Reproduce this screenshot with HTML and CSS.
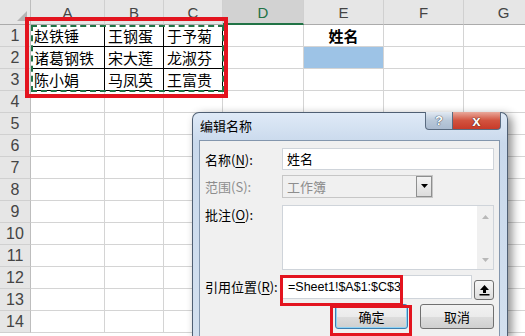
FILE: index.html
```html
<!DOCTYPE html>
<html lang="zh-CN">
<head>
    <meta charset="UTF-8">
    <title>编辑名称</title>
    <link rel="stylesheet" href="styles.css">
</head>
<body>
    <div class="sheet">
        <div class="grid">
            <div class="corner"><span class="tri"></span></div>
            <div class="colh">A</div>
            <div class="colh">B</div>
            <div class="colh">C</div>
            <div class="colh sel">D</div>
            <div class="colh">E</div>
            <div class="colh">F</div>
            <div class="colh">G</div>

            <div class="rowh">1</div>
            <div class="cell b">赵铁锤</div><div class="cell b">王钢蛋</div><div class="cell b">于予菊</div>
            <div class="cell"></div><div class="cell bold">姓名</div><div class="cell"></div><div class="cell"></div>

            <div class="rowh">2</div>
            <div class="cell b">诸葛钢铁</div><div class="cell b">宋大莲</div><div class="cell b">龙淑芬</div>
            <div class="cell"></div><div class="cell fill"></div><div class="cell"></div><div class="cell"></div>

            <div class="rowh">3</div>
            <div class="cell b">陈小娟</div><div class="cell b">马凤英</div><div class="cell b">王富贵</div>
            <div class="cell"></div><div class="cell"></div><div class="cell"></div><div class="cell"></div>

            <div class="rowh">4</div><div class="cell"></div><div class="cell"></div><div class="cell"></div><div class="cell"></div><div class="cell"></div><div class="cell"></div><div class="cell"></div>
            <div class="rowh">5</div><div class="cell"></div><div class="cell"></div><div class="cell"></div><div class="cell"></div><div class="cell"></div><div class="cell"></div><div class="cell"></div>
            <div class="rowh">6</div><div class="cell"></div><div class="cell"></div><div class="cell"></div><div class="cell"></div><div class="cell"></div><div class="cell"></div><div class="cell"></div>
            <div class="rowh">7</div><div class="cell"></div><div class="cell"></div><div class="cell"></div><div class="cell"></div><div class="cell"></div><div class="cell"></div><div class="cell"></div>
            <div class="rowh">8</div><div class="cell"></div><div class="cell"></div><div class="cell"></div><div class="cell"></div><div class="cell"></div><div class="cell"></div><div class="cell"></div>
            <div class="rowh">9</div><div class="cell"></div><div class="cell"></div><div class="cell"></div><div class="cell"></div><div class="cell"></div><div class="cell"></div><div class="cell"></div>
            <div class="rowh">10</div><div class="cell"></div><div class="cell"></div><div class="cell"></div><div class="cell"></div><div class="cell"></div><div class="cell"></div><div class="cell"></div>
            <div class="rowh">11</div><div class="cell"></div><div class="cell"></div><div class="cell"></div><div class="cell"></div><div class="cell"></div><div class="cell"></div><div class="cell"></div>
            <div class="rowh">12</div><div class="cell"></div><div class="cell"></div><div class="cell"></div><div class="cell"></div><div class="cell"></div><div class="cell"></div><div class="cell"></div>
            <div class="rowh">13</div><div class="cell"></div><div class="cell"></div><div class="cell"></div><div class="cell"></div><div class="cell"></div><div class="cell"></div><div class="cell"></div>
            <div class="rowh">14</div><div class="cell"></div><div class="cell"></div><div class="cell"></div><div class="cell"></div><div class="cell"></div><div class="cell"></div><div class="cell"></div>
        </div>
        <div class="ants"></div>
        <div class="mark mark-table"></div>
    </div>

    <div class="dialog">
        <div class="titlebar">
            <span class="title">编辑名称</span>
            <div class="caption-btns">
                <span class="cap-help">?</span>
                <span class="cap-close">x</span>
            </div>
        </div>
        <div class="client">
            <div class="form">
                <label>名称(<u>N</u>):</label>
                <div class="field">姓名</div>

                <label class="off">范围(S):</label>
                <div class="select">
                    <span>工作簿</span>
                    <span class="drop"><svg width="7" height="4" viewBox="0 0 7 4"><path d="M0 0h7L3.5 4z" fill="#000"/></svg></span>
                </div>

                <label>批注(<u>O</u>):</label>
                <div class="memo">
                    <div class="vscroll">
                        <svg width="7" height="4" viewBox="0 0 7 4"><path d="M0 4h7L3.5 0z" fill="#b8b8b8"/></svg>
                        <svg width="7" height="4" viewBox="0 0 7 4"><path d="M0 0h7L3.5 4z" fill="#b8b8b8"/></svg>
                    </div>
                </div>

                <label>引用位置(<u>R</u>):</label>
                <div class="refrow">
                    <div class="field ref">=Sheet1!$A$1:$C$3</div>
                    <span class="collapse"><svg width="11" height="12" viewBox="0 0 11 12"><path d="M5.5 1L1 6h3v3h3V6h3z" fill="#000"/><rect x="0.5" y="10" width="10" height="1.5" fill="#000"/></svg></span>
                </div>
            </div>
            <div class="actions">
                <button class="btn ok">确定</button>
                <button class="btn">取消</button>
            </div>
        </div>
    </div>

    <div class="mark mark-ref"></div>
    <div class="mark mark-ok"></div>
</body>
</html>
```

FILE: styles.css
```css
*{
    margin: 0;
    padding: 0;
    box-sizing: border-box;
}
body{
    width: 525px;
    height: 336px;
    overflow: hidden;
    background: #fff;
    font-family: "Noto Sans CJK SC", "Liberation Sans", sans-serif;
    position: relative;
}

/* 表格 */
.sheet{
    position: relative;
    height: 336px;
    overflow: hidden;
}
.grid{
    display: grid;
    grid-template-columns: 31px 74px 59px 59px 81px 80px 80px 80px;
    grid-template-rows: 25px;
    grid-auto-rows: 22px;
    width: 544px;
}
.corner{
    background: #e6e6e6;
    border-right: 1px solid #bdbdbd;
    border-bottom: 1px solid #ababab;
    position: relative;
}
.tri{
    position: absolute;
    right: 3px;
    bottom: 3px;
    width: 0;
    height: 0;
    border-left: 10px solid transparent;
    border-bottom: 10px solid #b5b5b5;
}
.colh{
    background: #e6e6e6;
    border-right: 1px solid #d0d0d0;
    border-bottom: 1px solid #ababab;
    color: #444;
    font-family: "Liberation Sans", sans-serif;
    font-size: 15px;
    text-align: center;
    line-height: 25px;
}
.colh.sel{
    background: #d2d2d2;
    border-bottom: 2px solid #217346;
    color: #217346;
}
.rowh{
    background: #e6e6e6;
    border-right: 1px solid #bdbdbd;
    border-bottom: 1px solid #d0d0d0;
    color: #444;
    font-family: "Liberation Sans", sans-serif;
    font-size: 16px;
    text-align: center;
    line-height: 22px;
}
.cell{
    border-right: 1px solid #d4d4d4;
    border-bottom: 1px solid #d4d4d4;
    font-size: 15px;
    line-height: 21px;
    padding-left: 3px;
    color: #000;
    white-space: nowrap;
}
.cell.b{
    border-color: #000;
}
.cell.bold{
    font-weight: bold;
    text-align: center;
    padding-left: 0;
}
.cell.fill{
    background: #9dc3e6;
}
.ants{
    position: absolute;
    left: 31px;
    top: 25px;
    width: 193px;
    height: 67px;
    border: 2px dashed #217346;
}

/* 红框标注 */
.mark{
    position: absolute;
    border: 3px solid #e3141f;
    z-index: 5;
}
.mark-table{
    left: 25px;
    top: 17px;
    width: 203px;
    height: 81px;
    border-width: 4px;
}
.mark-ref{
    left: 280px;
    top: 275px;
    width: 123px;
    height: 31px;
}
.mark-ok{
    left: 330px;
    top: 305px;
    width: 82px;
    height: 31px;
}

/* 对话框 */
.dialog{
    position: absolute;
    left: 192px;
    top: 112px;
    width: 316px;
    height: 224px;
    border: 1px solid #4f5f73;
    border-bottom: none;
    border-radius: 7px 7px 0 0;
    background: linear-gradient(#dfeaf7, #c9d9ec 30px, #d3e0ef);
    box-shadow: 4px 3px 10px rgba(0,0,0,0.45);
    padding: 0 7px 0 6px;
    font-size: 13px;
    color: #000;
    display: flex;
    flex-direction: column;
}
.titlebar{
    height: 27px;
    flex: none;
    display: flex;
    justify-content: space-between;
    align-items: flex-start;
}
.title{
    padding: 4px 0 0 1px;
    line-height: 18px;
}
.caption-btns{
    display: flex;
    margin-top: -1px;
    margin-right: -1px;
}
.caption-btns span{
    height: 18px;
    border: 1px solid #5a6b80;
    border-top: none;
    display: flex;
    align-items: center;
    justify-content: center;
    font-family: "Liberation Sans", sans-serif;
    font-weight: bold;
}
.cap-help{
    width: 28px;
    border-radius: 0 0 0 4px;
    background: linear-gradient(#e2eaf3, #b9c8d9 50%, #aabbd0);
    color: #fff;
    font-size: 13px;
    text-shadow: 0 0 1px #2b3a4c, 0 0 1px #2b3a4c;
}
.cap-close{
    width: 48px;
    border-left: none !important;
    border-radius: 0 0 4px 0;
    background: linear-gradient(#e9a99b, #d2533f 50%, #c73a29);
    color: #fff;
    font-size: 15px;
    text-shadow: 0 0 1px #451009, 0 0 1px #451009;
}
.client{
    flex: 1;
    border: 1px solid #8396ad;
    border-bottom: none;
    background: #f0f0f0;
    padding: 7px 5px 0 5px;
}
.form{
    display: grid;
    grid-template-columns: 77px 1fr;
    grid-template-rows: 22px 23px 67px 24px;
    row-gap: 5px;
}
.form label{
    line-height: 22px;
    padding-top: 1px;
    white-space: nowrap;
}
.form label.off{
    color: #8d8d8d;
}
.form u{
    text-underline-offset: 2px;
}
.field{
    background: #fff;
    border: 1px solid #cfd4da;
    padding-left: 4px;
    line-height: 20px;
    font-size: 13px;
}
.select{
    width: 151px;
    background: #f0f0f0;
    border: 1px solid #c6c6c6;
    display: flex;
    justify-content: space-between;
    align-items: center;
    padding-left: 4px;
    color: #8d8d8d;
}
.drop{
    width: 16px;
    height: 21px;
    border: 1px solid #8e8f8f;
    background: linear-gradient(#f4f4f4, #dcdcdc);
    display: flex;
    justify-content: center;
    padding-top: 7px;
}
.memo{
    margin-top: 2px;
    background: #fff;
    border: 1px solid #cfd4da;
    display: flex;
    justify-content: flex-end;
}
.vscroll{
    width: 16px;
    background: #f0f0f0;
    display: flex;
    flex-direction: column;
    justify-content: space-between;
    align-items: center;
    padding: 9px 0 7px;
}
.refrow{
    display: flex;
    align-items: flex-end;
    gap: 2px;
}
.field.ref{
    flex: 1;
    height: 24px;
    font-family: "Liberation Sans", sans-serif;
    font-size: 12.5px;
    line-height: 22px;
    padding-left: 5px;
}
.collapse{
    width: 20px;
    height: 20px;
    margin-bottom: -1px;
    border: 1px solid #707070;
    border-radius: 3px;
    background: linear-gradient(#f6f6f6, #dddddd);
    display: flex;
    align-items: center;
    justify-content: center;
}
.actions{
    display: flex;
    justify-content: flex-end;
    gap: 12px;
    margin-top: 5px;
}
.btn{
    width: 74px;
    height: 25px;
    border: 1px solid #707070;
    border-radius: 3px;
    background: linear-gradient(#f2f2f2, #ebebeb 50%, #dddddd 51%, #cfcfcf);
    font-family: "Noto Sans CJK SC", sans-serif;
    font-size: 13px;
    color: #000;
}
.btn.ok{
    width: 73px;
    border-color: #3c7fb1;
    box-shadow: inset 0 0 0 1px #8fd3f5;
}
```
